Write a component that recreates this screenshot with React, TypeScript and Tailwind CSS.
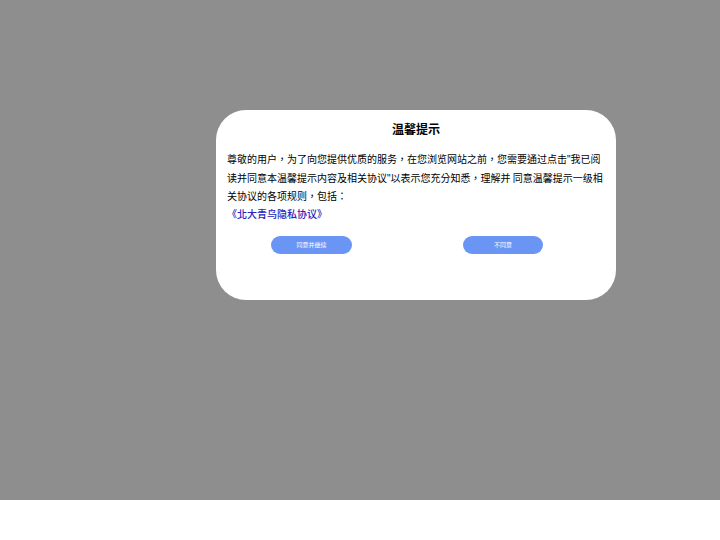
function Q() {
  return <span className="font-['Liberation_Sans',sans-serif]">"</span>;
}

export default function App() {
  return (
    <div lang="zh-Hant" className="w-[720px] h-[540px] bg-white font-['Noto_Sans_CJK_TC',sans-serif]">
      <div className="w-[720px] h-[500px] bg-[#8e8e8e] pt-[110px] pl-[216px]">
        <div className="w-[400px] h-[190px] bg-white rounded-[30px] px-[11px] pt-[10px]">
          <div className="text-center text-[12px] leading-[18px] font-bold text-black">温馨提示</div>
          <div className="mt-[12px] text-[10px] leading-[17.5px] text-black whitespace-nowrap">
            尊敬的用户，为了向您提供优质的服务，在您浏览网站之前，您需要通过点击<Q />我已阅
            <br />
            读并同意本温馨提示内容及相关协议<Q />以表示您充分知悉，理解并 同意温馨提示一级相
            <br />
            关协议的各项规则，包括：
          </div>
          <div className="text-[10px] leading-[17px] text-[#2a22c0] font-medium">《北大青鸟隐私协议》</div>
          <div className="flex mt-[14px] pl-[44px]">
            <button className="w-[81px] h-[18px] rounded-full bg-[#6a95f5] text-white text-[6px] leading-[18px]">同意并继续</button>
            <button className="ml-[111px] w-[80px] h-[18px] rounded-full bg-[#6a95f5] text-white text-[6px] leading-[18px]">不同意</button>
          </div>
        </div>
      </div>
    </div>
  );
}
